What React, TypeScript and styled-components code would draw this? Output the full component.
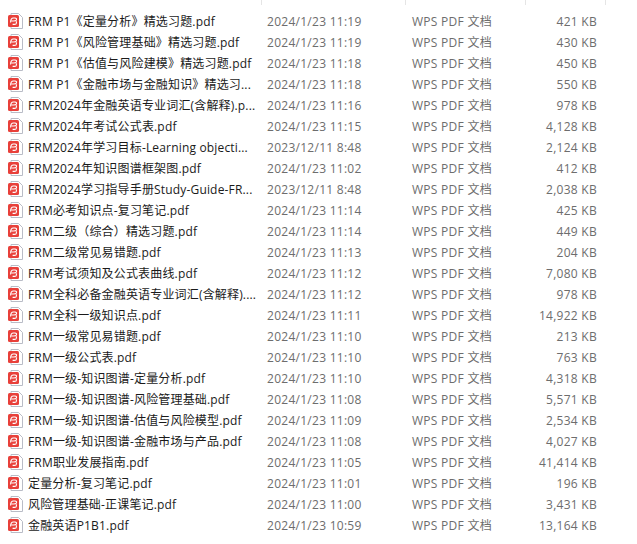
import React from "react";
import styled, { createGlobalStyle } from "styled-components";

const Global = createGlobalStyle`
  html, body { margin: 0; padding: 0; background: #fff; }
  body { font-family: "Open Sans", "Noto Sans CJK SC", sans-serif; }
`;

const Page = styled.div`
  width: 637px;
  height: 544px;
  overflow: hidden;
  background: #fff;
`;

const HeaderEdge = styled.div`
  display: grid;
  grid-template-columns: 262px 144px 120px 80px;
  height: 5px;
`;

const HeaderCell = styled.div`
  border-right: 1px solid #e5e5e5;
`;

const List = styled.div`
  padding-top: 6px;
`;

const Row = styled.div`
  display: grid;
  grid-template-columns: 28px 239px 145px 110px 75px;
  align-items: center;
  height: 21px;
`;

const IconCell = styled.div`
  display: flex;
  padding-left: 8px;
  height: 16px;
  margin-top: -1px;
`;

const Name = styled.div`
  font-size: 12px;
  line-height: 21px;
  letter-spacing: 0.17px;
  color: #1a1a1a;
  white-space: nowrap;
  overflow: hidden;
`;

const Meta = styled.div`
  font-size: 12px;
  line-height: 21px;
  letter-spacing: 0.27px;
  color: #6d6d6d;
  white-space: nowrap;
`;

const Size = styled(Meta)`
  text-align: right;
`;

const files: [string, string, string][] = [
  ["FRM P1《定量分析》精选习题.pdf", "2024/1/23 11:19", "421 KB"],
  ["FRM P1《风险管理基础》精选习题.pdf", "2024/1/23 11:19", "430 KB"],
  ["FRM P1《估值与风险建模》精选习题.pdf", "2024/1/23 11:18", "450 KB"],
  ["FRM P1《金融市场与金融知识》精选习...", "2024/1/23 11:18", "550 KB"],
  ["FRM2024年金融英语专业词汇(含解释).p...", "2024/1/23 11:16", "978 KB"],
  ["FRM2024年考试公式表.pdf", "2024/1/23 11:15", "4,128 KB"],
  ["FRM2024年学习目标-Learning objecti...", "2023/12/11 8:48", "2,124 KB"],
  ["FRM2024年知识图谱框架图.pdf", "2024/1/23 11:02", "412 KB"],
  ["FRM2024学习指导手册Study-Guide-FR...", "2023/12/11 8:48", "2,038 KB"],
  ["FRM必考知识点-复习笔记.pdf", "2024/1/23 11:14", "425 KB"],
  ["FRM二级（综合）精选习题.pdf", "2024/1/23 11:14", "449 KB"],
  ["FRM二级常见易错题.pdf", "2024/1/23 11:13", "204 KB"],
  ["FRM考试须知及公式表曲线.pdf", "2024/1/23 11:12", "7,080 KB"],
  ["FRM全科必备金融英语专业词汇(含解释)....", "2024/1/23 11:12", "978 KB"],
  ["FRM全科一级知识点.pdf", "2024/1/23 11:11", "14,922 KB"],
  ["FRM一级常见易错题.pdf", "2024/1/23 11:10", "213 KB"],
  ["FRM一级公式表.pdf", "2024/1/23 11:10", "763 KB"],
  ["FRM一级-知识图谱-定量分析.pdf", "2024/1/23 11:10", "4,318 KB"],
  ["FRM一级-知识图谱-风险管理基础.pdf", "2024/1/23 11:08", "5,571 KB"],
  ["FRM一级-知识图谱-估值与风险模型.pdf", "2024/1/23 11:09", "2,534 KB"],
  ["FRM一级-知识图谱-金融市场与产品.pdf", "2024/1/23 11:08", "4,027 KB"],
  ["FRM职业发展指南.pdf", "2024/1/23 11:05", "41,414 KB"],
  ["定量分析-复习笔记.pdf", "2024/1/23 11:01", "196 KB"],
  ["风险管理基础-正课笔记.pdf", "2024/1/23 11:00", "3,431 KB"],
  ["金融英语P1B1.pdf", "2024/1/23 10:59", "13,164 KB"],
];

function PdfIcon() {
  return (
    <svg width="16" height="17" viewBox="0 0 16 17" fill="none">
      <path d="M3 .5H10.5L14.5 4.5V15.5H3Z" fill="#fff" stroke="#b9bcc6" />
      <rect x="0" y="2" width="11" height="12" rx="1.5" fill="#e8403a" />
      <path
        d="M2.6 9.4C2.6 6.8 3 5 5.4 5H7C8.4 5 8.8 6 8.4 7C8 8 6.6 8 5.4 8H3.4M8.4 8.2V10C8.4 11 7.4 11.4 6.4 11.4H4.6"
        stroke="#fff"
        strokeWidth="1.1"
        fill="none"
      />
    </svg>
  );
}

export default function App() {
  return (
    <Page>
      <Global />
      <HeaderEdge>
        <HeaderCell />
        <HeaderCell />
        <HeaderCell />
        <HeaderCell />
      </HeaderEdge>
      <List>
        {files.map(([name, date, size]) => (
          <Row key={name}>
            <IconCell><PdfIcon /></IconCell>
            <Name>{name}</Name>
            <Meta>{date}</Meta>
            <Meta>WPS PDF 文档</Meta>
            <Size>{size}</Size>
          </Row>
        ))}
      </List>
    </Page>
  );
}
